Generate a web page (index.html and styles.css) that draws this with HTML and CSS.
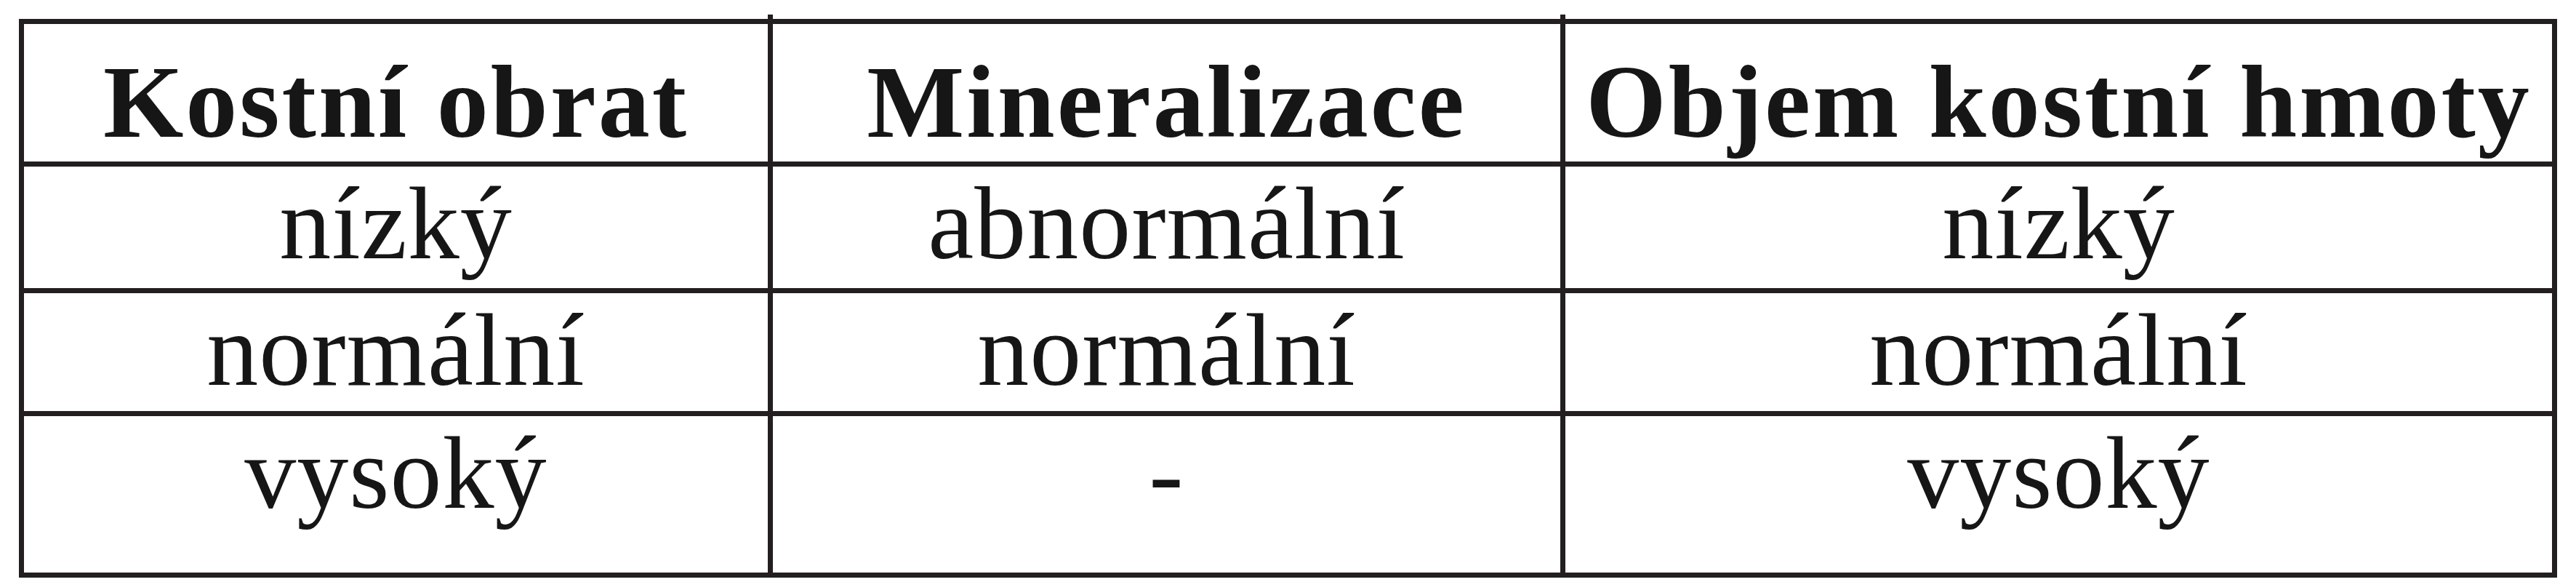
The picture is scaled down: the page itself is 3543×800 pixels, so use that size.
FILE: index.html
```html
<!DOCTYPE html>
<html lang="cs">
<head>
<meta charset="utf-8">
<title>Kostní obrat</title>
<link rel="stylesheet" href="styles.css">
</head>
<body>
<div class="page">
  <div class="table">
    <div class="cell head">Kostní obrat</div>
    <div class="cell head tick">Mineralizace</div>
    <div class="cell head tick">Objem kostní hmoty</div>

    <div class="cell">nízký</div>
    <div class="cell">abnormální</div>
    <div class="cell">nízký</div>

    <div class="cell">normální</div>
    <div class="cell">normální</div>
    <div class="cell">normální</div>

    <div class="cell">vysoký</div>
    <div class="cell">-</div>
    <div class="cell">vysoký</div>
  </div>
</div>
</body>
</html>
```
FILE: styles.css
```css
html, body {
  margin: 0;
  padding: 0;
  background: #ffffff;
}

.page {
  padding: 26px 0 0 26px;
}

.table {
  display: inline-grid;
  grid-template-columns: 1023px 1083px 1357px;
  grid-template-rows: 189px 167px 162px 215px;
  gap: 7px;
  padding: 7px;
  background: #231f20;
  font-family: "Liberation Serif", "DejaVu Serif", serif;
  color: #161616;
}

.cell {
  position: relative;
  background: #ffffff;
  text-align: center;
  font-size: 142px;
  line-height: 1;
  padding-top: 7px;
  letter-spacing: 1px;
  white-space: nowrap;
}

.head {
  font-weight: bold;
  padding-top: 36px;
  letter-spacing: 3px;
}

.tick::before {
  content: "";
  position: absolute;
  left: -7px;
  top: -13px;
  width: 7px;
  height: 6px;
  background: #231f20;
}
```
